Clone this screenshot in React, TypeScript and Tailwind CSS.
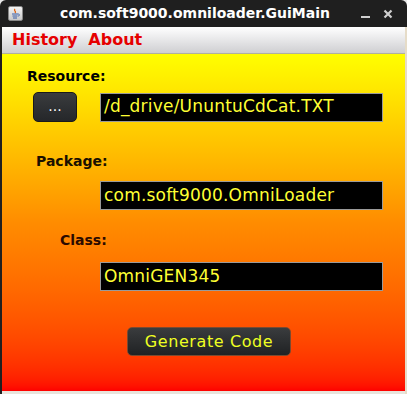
import React from "react";

const font = { fontFamily: '"DejaVu Sans", "Liberation Sans", sans-serif' };

function JavaIcon() {
  return (
    <div className="w-[15px] h-[15px] rounded-[2px] bg-gradient-to-b from-[#f4f4f4] to-[#c8c8c8] border border-[#888] flex items-center justify-center">
      <svg width="11" height="11" viewBox="0 0 11 11">
        <path d="M5 1 C3 3 7 3 5 5" stroke="#e05a00" strokeWidth="1.2" fill="none" />
        <path d="M2 6 H8 M2.5 8 H7.5 M3 10 H7" stroke="#3a5ea8" strokeWidth="1" />
        <path d="M8 6 C10 6 10 8 8 8" stroke="#3a5ea8" strokeWidth="0.9" fill="none" />
      </svg>
    </div>
  );
}

function Field({ value }: { value: string }) {
  return (
    <div className="w-[283px] h-[29px] bg-black border border-[#9a9a9a] flex items-center pl-[3px] text-[17px] text-[#ffff33] tracking-[0.2px]">
      {value}
    </div>
  );
}

export default function App() {
  return (
    <div className="w-[407px] h-[394px] bg-[#e8e8e8] flex flex-col overflow-hidden" style={font}>
      <div className="h-[27px] bg-[#1f1f1f] rounded-t-[6px] flex items-center px-[8px] relative shrink-0">
        <JavaIcon />
        <div className="flex-1 text-center text-white font-bold text-[14px] pl-[6px]">
          com.soft9000.omniloader.GuiMain
        </div>
        <div className="flex items-center gap-[13px] pr-[6px] text-[#cfcfcf]">
          <div className="w-[9px] h-[2px] bg-[#cfcfcf] mt-[6px]" />
          <svg width="10" height="10" viewBox="0 0 10 10">
            <path d="M1.5 1.5 L8.5 8.5 M8.5 1.5 L1.5 8.5" stroke="#cfcfcf" strokeWidth="2.2" />
          </svg>
        </div>
      </div>
      <div className="flex-1 flex flex-col border-l-[2px] border-[#1f1f1f] border-r-[2px] border-r-[#e6dcc8]">
        <div className="h-[27px] bg-gradient-to-b from-white to-[#cfcfd2] flex items-center gap-[11px] pl-[10px] text-[16px] font-bold text-[#e60000] shrink-0 border-b border-[#b0b0a0]">
          <span>History</span>
          <span>About</span>
        </div>
        <div className="flex-1 bg-gradient-to-b from-[#ffff00] via-[#ff8c00] to-[#ff0000] flex flex-col relative">
          <div className="pl-[25px] pt-[12px] text-[14px] font-bold text-black h-[38px]">Resource:</div>
          <div className="flex items-center pl-[31px]">
            <div className="w-[44px] h-[30px] rounded-[5px] bg-gradient-to-b from-[#3a3c3e] to-[#25272a] border border-[#1a1a1a] flex items-center justify-center text-white text-[14px] pb-[2px]">
              ...
            </div>
            <div className="ml-[23px]">
              <Field value="/d_drive/UnuntuCdCat.TXT" />
            </div>
          </div>
          <div className="pl-[34px] pt-[29px] text-[14px] font-bold text-[#1a1000] h-[59px]">Package:</div>
          <div className="pl-[98px]">
            <Field value="com.soft9000.OmniLoader" />
          </div>
          <div className="pl-[58px] pt-[20px] text-[14px] font-bold text-[#2a0a00] h-[52px]">Class:</div>
          <div className="pl-[98px]">
            <Field value="OmniGEN345" />
          </div>
          <div className="pl-[125px] pt-[36px]">
            <div className="w-[164px] h-[29px] rounded-[5px] bg-gradient-to-b from-[#3a3c3e] to-[#202224] border border-[#7a4a30] flex items-center justify-center text-[16px] text-[#eeff22] tracking-[0.6px]">
              Generate Code
            </div>
          </div>
        </div>
        <div className="h-[3px] bg-[#e8e4dc] shrink-0" />
      </div>
    </div>
  );
}
